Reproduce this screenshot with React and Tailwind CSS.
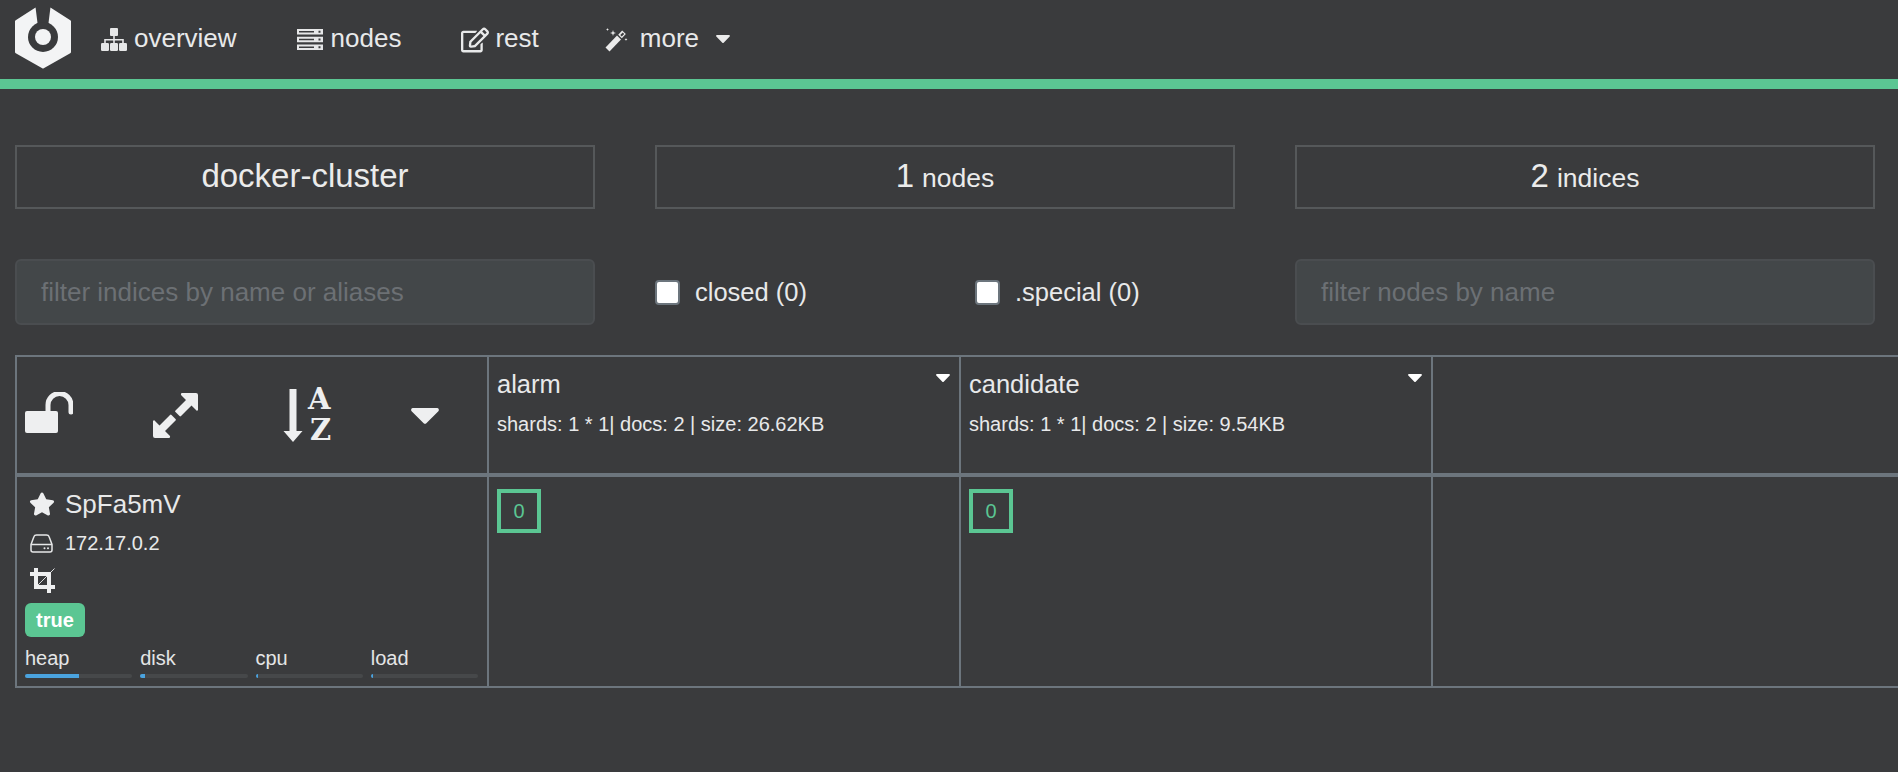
import React from "react";
import { FaRegEdit, FaCaretDown, FaStar } from "react-icons/fa";

function Logo() {
  return (
    <svg width="56" height="62" viewBox="0 0 56 62" className="shrink-0 mb-[4px]">
      <path
        fill="#f3f4f5"
        stroke="#f3f4f5"
        strokeWidth="3"
        strokeLinejoin="round"
        d="M21 2 L1.5 14.5 V45 L28 60 L54.5 45 V14.5 L35 2 Z"
      />
      <path fill="#3a3b3d" d="M20.5 0 H35.5 L33 20 H23 Z" />
      <circle cx="28" cy="30" r="15" fill="#3a3b3d" />
      <circle cx="28" cy="30" r="8" fill="#f3f4f5" />
    </svg>
  );
}

function SitemapIcon() {
  return (
    <svg width="26" height="23" viewBox="0 0 26 23" className="shrink-0" fill="#e6e7e8">
      <rect x="9" y="0" width="8" height="8" rx="1" />
      <path d="M12.2 8h1.6v3H22.8v4h-1.6v-2.4H13.8V15h-1.6v-2.4H4.8V15H3.2v-4h9z" />
      <rect x="0" y="15" width="8" height="8" rx="1.2" />
      <rect x="9" y="15" width="8" height="8" rx="1.2" />
      <rect x="18" y="15" width="8" height="8" rx="1.2" />
    </svg>
  );
}

function ServerIcon() {
  return (
    <svg width="26" height="21" viewBox="0 0 26 21" className="shrink-0">
      <path
        fill="#e6e7e8"
        fillRule="evenodd"
        d="M0 0h26v5.5H0zM2 2v1.5h15V2zM21.5 1.700v2h2v-2zM0 7.700h26v5.600H0zM2 9.700v1.600h15V9.700zM21.5 9.500v2h2v-2zM0 15.500h26V21H0zM2 17.500V19h15v-1.500zM21.5 17.200v2h2v-2z"
      />
    </svg>
  );
}

function WandIcon() {
  return (
    <svg width="24" height="24" viewBox="0 0 24 24" className="shrink-0">
      <path d="M3.500 21.500 L15 9.500" stroke="#ebebeb" strokeWidth="5.500" />
      <path d="M16 8.500 L20 4.200" stroke="#ebebeb" strokeWidth="5" />
      <path d="M17 7.800 L19.500 5.200" stroke="#3a3b3d" strokeWidth="2" />
      <path
        fill="#ebebeb"
        d="M9 2l.7 2.300L12 5l-2.300.7L9 8l-.7-2.300L6 5l2.300-.7zM3.500 0l.4 1.100L5 1.500l-1.100.4L3.500 3l-.4-1.100L2 1.500l1.100-.4zM22 10l.4 1.100 1.100.4-1.100.4L22 13l-.4-1.100-1.100-.4 1.100-.4z"
      />
    </svg>
  );
}

function UnlockIcon() {
  return (
    <svg width="48" height="46" viewBox="0 0 48 46" className="shrink-0" fill="#eeeff0">
      <rect x="0" y="19" width="33" height="22" rx="2" />
      <path
        d="M23 21 V13 A11.500 11.500 0 0 1 46 13 V20"
        fill="none"
        stroke="#eeeff0"
        strokeWidth="5"
        strokeLinecap="round"
      />
    </svg>
  );
}

function ExpandIcon() {
  const d =
    "M29 0H43a2 2 0 0 1 2 2V16a1 1 0 0 1-2 1L38.500 12.500 28 23a1 1 0 0 1-1.500 0L22.500 19a1 1 0 0 1 0-1.500L33 7 28.500 2.500A1.400 1.400 0 0 1 29 0Z";
  return (
    <svg width="45" height="45" viewBox="0 0 45 45" className="shrink-0" fill="#eeeff0">
      <path d={d} />
      <path d={d} transform="rotate(180 22.500 22.500)" />
    </svg>
  );
}

function SortIcon() {
  return (
    <div className="relative w-[47px] h-[53px] shrink-0">
      <svg width="20" height="53" viewBox="0 0 20 53" className="absolute left-0 top-0" fill="#eeeff0">
        <path d="M6.500 0h7v42h6l-9.500 11L0.500 42h6z" />
      </svg>
      <span className="absolute left-[25px] top-[-5px] text-[29px] leading-[30px] font-bold font-['DejaVu_Serif',serif]">A</span>
      <span className="absolute left-[27px] top-[26px] text-[29px] leading-[30px] font-bold font-['DejaVu_Serif',serif]">Z</span>
    </div>
  );
}

function HddIcon() {
  return (
    <svg width="23" height="19" viewBox="0 0 23 19" className="shrink-0 ml-[5px]">
      <path
        fill="none"
        stroke="#e6e7e8"
        strokeWidth="1.500"
        d="M1 10.500 L4 2.500 Q4.500 1 6.500 1 H16.500 Q18.500 1 19 2.500 L22 10.500 V16 Q22 18 20 18 H3 Q1 18 1 16 Z M1 10.500 H22"
      />
      <circle cx="14.500" cy="14.200" r="1" fill="#e6e7e8" />
      <circle cx="18" cy="14.200" r="1" fill="#e6e7e8" />
    </svg>
  );
}

function CropIcon() {
  return (
    <svg width="25" height="25" viewBox="0 0 25 25" className="block ml-[5px] mt-[13px]" fill="#eeeff0">
      <path d="M4 0h4v17h17v4h-4v4h-4v-4H4V8H0V4h4zM8 4h13v13h-4V8H8z" />
      <path d="M7 18 L24.500 0.500" stroke="#eeeff0" strokeWidth="0.900" fill="none" />
    </svg>
  );
}

function NavItem({ icon, label, className }) {
  return (
    <div className={"flex items-center text-[26px] text-[#e8e9ea] " + className}>
      {icon}
      <span className="mb-[2px]">{label}</span>
    </div>
  );
}

function Stat({ children }) {
  return (
    <div className="h-[64px] border-2 border-[#55585a] flex items-center justify-center text-[#ebebeb]">
      {children}
    </div>
  );
}

function Check({ label, className }) {
  return (
    <label className={"flex items-center gap-[15px] text-[25.500px] text-[#e8e9ea] " + className}>
      <span className="block w-[25px] h-[25px] rounded-[4px] bg-white border-2 border-[#6c757d]" />
      {label}
    </label>
  );
}

function Metric({ label, width }) {
  return (
    <div>
      <div className="text-[20px] leading-[24px] text-[#e4e5e6]">{label}</div>
      <div className="h-[4px] mt-[4px] rounded-[3px] bg-[#46484a] overflow-hidden">
        <div className="h-full bg-[#4aa3df]" style={{ width }} />
      </div>
    </div>
  );
}

function IndexHead({ name, info }) {
  return (
    <div className="relative border-l-2 border-[#6c757d] pl-[8px] pt-[11px] text-[#e8e9ea]">
      <div className="text-[25.500px] leading-[32px]">{name}</div>
      <div className="text-[20px] leading-[24px] mt-[12px] whitespace-pre">{info}</div>
      <FaCaretDown className="absolute right-[4px] top-[8px] text-white text-[24px]" />
    </div>
  );
}

function ShardCell() {
  return (
    <div className="border-l-2 border-[#6c757d] pl-[8px] pt-[12px]">
      <div className="w-[44px] h-[44px] border-[4px] border-[#5bc693] flex items-center justify-center text-[20px] text-[#5bc693]">
        0
      </div>
    </div>
  );
}

export default function App() {
  return (
    <div className="h-screen overflow-hidden bg-[#3a3b3d] font-['Liberation_Sans',Arial,sans-serif]">
      <nav className="h-[89px] border-b-[10px] border-[#5bc693] flex items-center pl-[15px]">
        <Logo />
        <NavItem className="ml-[30px] gap-[7px]" icon={<SitemapIcon />} label="overview" />
        <NavItem className="ml-[60px] gap-[8px]" icon={<ServerIcon />} label="nodes" />
        <NavItem className="ml-[60px] gap-[6px]" icon={<FaRegEdit className="text-[28px]" />} label="rest" />
        <NavItem className="ml-[65px] gap-[12px]" icon={<WandIcon />} label="more" />
        <FaCaretDown className="ml-[12px] mb-[4px] text-[24px] text-[#ebebeb]" />
      </nav>

      <div className="grid grid-cols-[580px_580px_580px] gap-x-[60px] px-[15px] pt-[56px]">
        <Stat><span className="text-[33px] mb-[2px]">docker-cluster</span></Stat>
        <Stat>
          <span className="text-[33px] mb-[2px]">1</span>
          <span className="text-[26.500px] ml-[8px] mt-[4px]">nodes</span>
        </Stat>
        <Stat>
          <span className="text-[33px] mb-[2px]">2</span>
          <span className="text-[26.500px] ml-[8px] mt-[4px]">indices</span>
        </Stat>
      </div>

      <div className="grid grid-cols-[580px_580px_580px] gap-x-[60px] px-[15px] mt-[50px] items-center">
        <input
          placeholder="filter indices by name or aliases"
          className="h-[66px] rounded-[6px] bg-[#434749] border-2 border-[#4a4d50] px-[24px] text-[26px] placeholder:text-[#6c7074] outline-none"
        />
        <div className="flex items-center">
          <Check label="closed (0)" className="w-[320px]" />
          <Check label=".special (0)" />
        </div>
        <input
          placeholder="filter nodes by name"
          className="h-[66px] rounded-[6px] bg-[#434749] border-2 border-[#4a4d50] px-[24px] text-[26px] placeholder:text-[#6c7074] outline-none"
        />
      </div>

      <div className="ml-[15px] mt-[30px] w-[1900px] border-t-2 border-b-2 border-l-2 border-[#6c757d]">
        <div className="grid grid-cols-[470px_472px_472px_472px] h-[116px]">
          <div className="flex items-center pl-[8px] text-[#eeeff0]">
            <UnlockIcon />
            <div className="ml-[80px]"><ExpandIcon /></div>
            <div className="ml-[85px]"><SortIcon /></div>
            <FaCaretDown className="ml-[71px] mb-[2px] text-[48px] shrink-0" />
          </div>
          <IndexHead name="alarm" info="shards: 1 * 1| docs: 2 | size: 26.62KB" />
          <IndexHead name="candidate" info="shards: 1 * 1| docs: 2 | size: 9.54KB" />
          <div className="border-l-2 border-[#6c757d]" />
        </div>
        <div className="grid grid-cols-[470px_472px_472px_472px] h-[213px] border-t-[4px] border-[#6c757d]">
          <div className="px-[8px] pt-[11px] text-[#e8e9ea]">
            <div className="flex items-center h-[32px]">
              <FaStar className="text-[26px] ml-[4px] text-[#eeeff0]" />
              <span className="ml-[10px] text-[26px]">SpFa5mV</span>
            </div>
            <div className="flex items-center h-[24px] mt-[11px]">
              <HddIcon />
              <span className="ml-[12px] text-[20px]">172.17.0.2</span>
            </div>
            <CropIcon />
            <div className="mt-[10px] w-[60px] h-[34px] rounded-[6px] bg-[#5bc693] text-white font-bold text-[20px] flex items-center justify-center">
              true
            </div>
            <div className="grid grid-cols-4 gap-x-[8px] mt-[9px] pr-[1px]">
              <Metric label="heap" width="50%" />
              <Metric label="disk" width="4%" />
              <Metric label="cpu" width="2%" />
              <Metric label="load" width="2%" />
            </div>
          </div>
          <ShardCell />
          <ShardCell />
          <div className="border-l-2 border-[#6c757d]" />
        </div>
      </div>
    </div>
  );
}
